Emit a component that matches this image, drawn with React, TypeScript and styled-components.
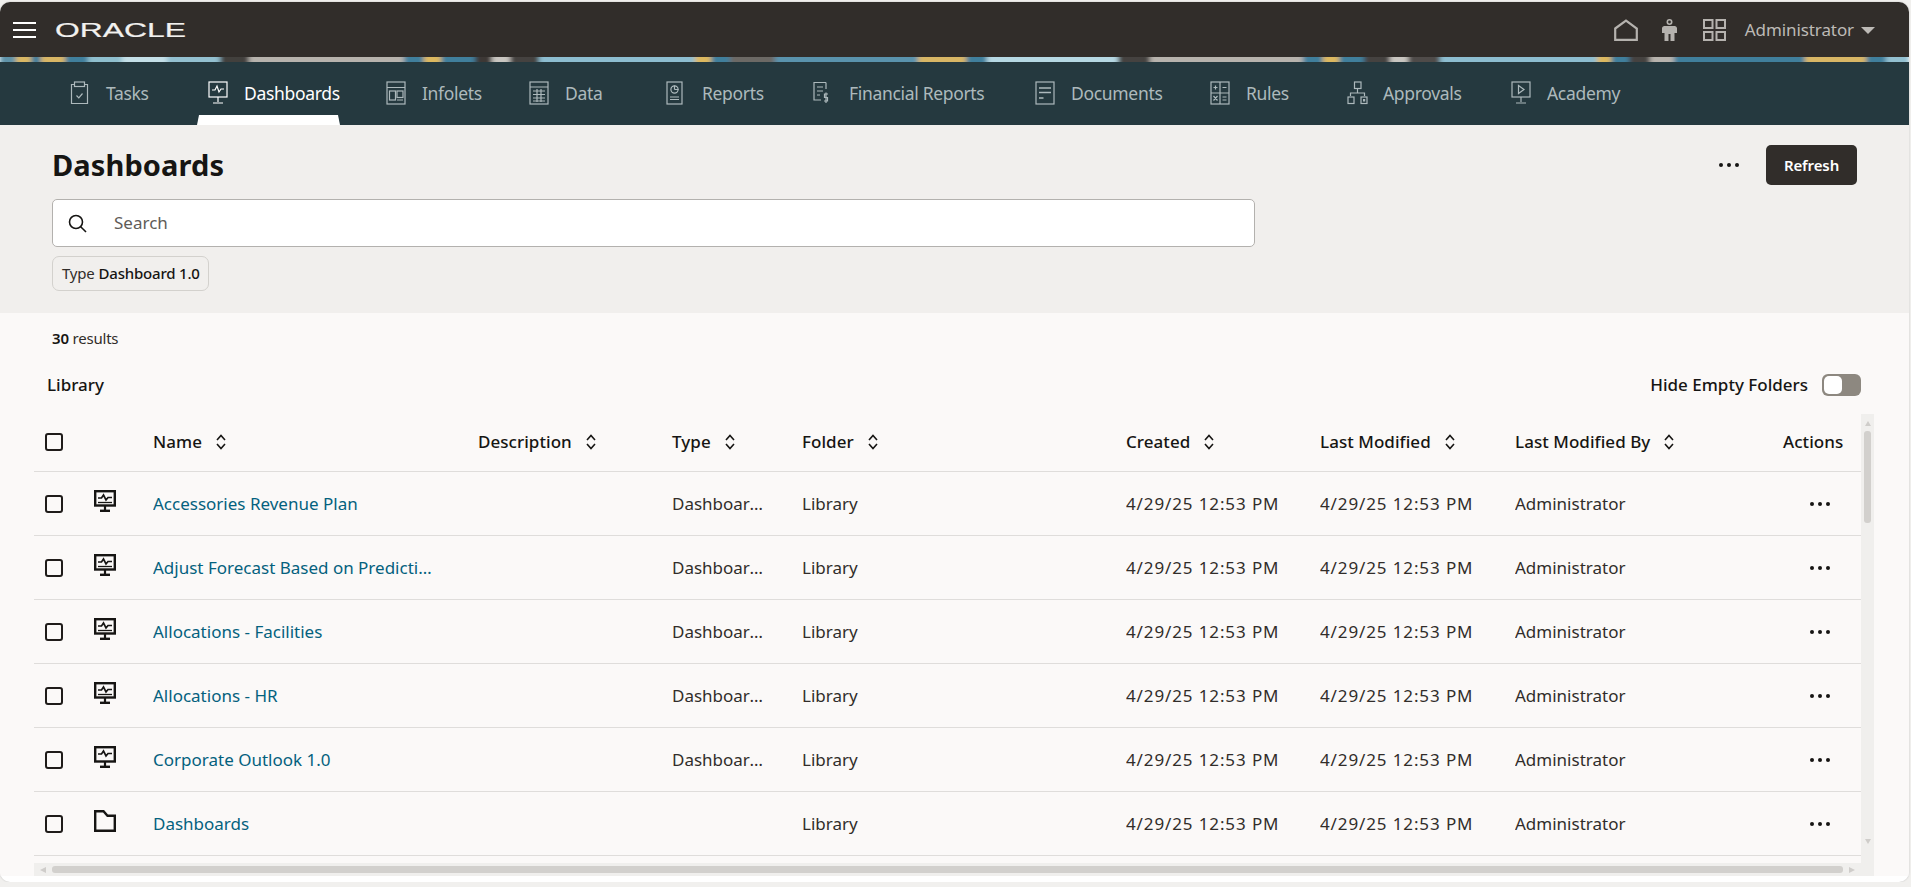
import React from 'react';
import styled, { createGlobalStyle } from 'styled-components';

const GlobalStyle = createGlobalStyle`
  html, body {
    margin: 0;
    padding: 0;
    background: #f1f0ee;
    overflow: hidden;
  }
  body {
    font-family: "Noto Sans", "Open Sans", sans-serif;
    color: #161513;
  }
  * {
    box-sizing: border-box;
  }
`;

const Shell = styled.div`
  width: 1909px;
  height: 880px;
  margin-top: 2px;
  border-radius: 10px;
  overflow: hidden;
  background: #ffffff;
  box-shadow: 0 0 2px rgba(0, 0, 0, 0.2);
  display: flex;
  flex-direction: column;
`;

const TopBar = styled.header`
  height: 55px;
  flex: none;
  background: #312d2a;
  display: flex;
  align-items: center;
  padding: 0 34px 0 13px;
  color: #bdbab6;
`;

const Hamburger = styled.div`
  width: 23px;
  height: 16px;
  display: flex;
  flex-direction: column;
  justify-content: space-between;
  margin-top: 1px;
  span {
    height: 2px;
    background: #ffffff;
  }
`;

const Logo = styled.svg`
  margin: 1px 0 0 19px;
  display: block;
`;

const Spacer = styled.div`
  flex: 1;
`;

const TopIcon = styled.svg<{ $gap: number }>`
  display: block;
  margin: 1px ${(p) => p.$gap}px 0 0;
`;

const UserName = styled.span`
  font-size: 17px;
  letter-spacing: -0.1px;
`;

const Caret = styled.span`
  width: 0;
  height: 0;
  margin: 1px 0 0 7px;
  border-left: 7px solid transparent;
  border-right: 7px solid transparent;
  border-top: 7px solid #bdbab6;
`;

const Banner = styled.svg`
  display: block;
  height: 5px;
  width: 100%;
  flex: none;
`;

const NavBar = styled.nav`
  height: 63px;
  flex: none;
  background: #25393f;
  display: flex;
  align-items: center;
  padding-left: 70px;
`;

const NavItem = styled.div<{ $w: number; $active?: boolean }>`
  position: relative;
  width: ${(p) => p.$w}px;
  flex: none;
  height: 100%;
  display: flex;
  align-items: center;
  gap: 15px;
  font-size: 17.5px;
  letter-spacing: -0.32px;
  padding-bottom: 2px;
  color: ${(p) => (p.$active ? '#ffffff' : '#adb9bc')};

  svg {
    flex: none;
    display: block;
  }
`;

const ActiveTab = styled.span`
  position: absolute;
  left: -11px;
  top: 53px;
  width: 143px;
  height: 10px;
  background: #ffffff;
  clip-path: polygon(2px 0, 141px 0, 143px 100%, 0 100%);
`;

const PageHead = styled.section`
  height: 188px;
  flex: none;
  background: #f1efed;
  padding: 20px 52px 0 52px;
  position: relative;
`;

const HeadRow = styled.div`
  display: flex;
  align-items: flex-start;
  justify-content: space-between;
`;

const Title = styled.h1`
  margin: 0;
  font-size: 29px;
  line-height: 40px;
  font-weight: 700;
  letter-spacing: 0.1px;
  color: #161513;
`;

const HeadActions = styled.div`
  display: flex;
  align-items: center;
  gap: 26px;
`;

const RefreshButton = styled.button`
  width: 91px;
  height: 40px;
  border: 0;
  border-radius: 5px;
  background: #312d2a;
  color: #ffffff;
  font-family: inherit;
  font-size: 15px;
  font-weight: 600;
  letter-spacing: -0.1px;
`;

const SearchBox = styled.div`
  width: 1203px;
  height: 48px;
  margin-top: 14px;
  background: #ffffff;
  border: 1px solid #b3b1ae;
  border-radius: 5px;
  display: flex;
  align-items: center;
  padding-left: 15px;
  gap: 27px;
  font-size: 17px;
  color: #5f5c58;
`;

const SearchLabel = styled.span`
  margin-top: -2px;
`;

const FilterChip = styled.div`
  display: inline-flex;
  align-items: center;
  gap: 4px;
  height: 35px;
  width: 157px;
  margin-top: 9px;
  padding: 0 0 2px 9px;
  border: 1px solid #d3d1cd;
  border-radius: 7px;
  font-size: 15px;
  letter-spacing: -0.2px;
  white-space: nowrap;
  color: #312d2a;

  b {
    font-weight: 500;
    color: #161513;
  }
`;

const Content = styled.main`
  flex: none;
  height: 563px;
  background: #fbf9f8;
  display: flex;
  flex-direction: column;
`;

const ResultCount = styled.div`
  height: 47px;
  padding: 15px 0 0 52px;
  font-size: 15px;
  line-height: 20px;
  letter-spacing: -0.2px;
  color: #312d2a;

  b {
    font-weight: 600;
    color: #161513;
  }
`;

const LibraryBar = styled.div`
  height: 54px;
  display: flex;
  align-items: center;
  justify-content: space-between;
  padding: 0 48px 5px 47px;
  font-size: 17px;
  font-weight: 500;
  color: #161513;
`;

const ToggleWrap = styled.div`
  display: flex;
  align-items: center;
  gap: 14px;
`;

const Toggle = styled.div`
  width: 39px;
  height: 22px;
  border-radius: 6px;
  background: #8d8880;
  padding: 2px;
  span {
    display: block;
    width: 18px;
    height: 18px;
    border-radius: 5px;
    background: #ffffff;
  }
`;

const TableFrame = styled.div`
  margin-left: 34px;
  width: 1840px;
  height: 462px;
  display: grid;
  grid-template-columns: 1827px 13px;
  grid-template-rows: 449px 13px;
`;

const Table = styled.div`
  overflow: hidden;
`;

const columns = '60px 59px 325px 194px 130px 324px 194px 195px 268px 78px';

const HeaderRow = styled.div`
  height: 58px;
  padding-bottom: 2px;
  display: grid;
  grid-template-columns: ${columns};
  align-items: center;
  border-bottom: 1px solid #dfdddb;
  font-size: 17px;
  font-weight: 500;
  letter-spacing: 0.05px;
  color: #161513;
`;

const Row = styled.div`
  height: 64px;
  display: grid;
  grid-template-columns: ${columns};
  align-items: center;
  border-bottom: 1px solid #dfdddb;
  font-size: 17px;
  color: #312d2a;
`;

const Checkbox = styled.span`
  display: block;
  width: 18px;
  height: 18px;
  margin-left: 11px;
  border: 2px solid #1f1c1a;
  border-radius: 3px;
`;

const HeadCell = styled.div`
  display: flex;
  align-items: center;
  gap: 14px;
  white-space: nowrap;
`;

const Cell = styled.div`
  white-space: nowrap;
  overflow: hidden;
  text-overflow: ellipsis;
`;

const DateCell = styled(Cell)`
  letter-spacing: 0.88px;
`;

const TypeCell = styled(Cell)`
  max-width: 95px;
`;

const NameLink = styled(Cell)`
  max-width: 284px;
  color: #04617e;
`;

const RowIcon = styled.svg`
  display: block;
  margin-top: -5px;
`;

const Kebab = styled.svg`
  display: block;
  margin-left: 26px;
`;

const HeadKebab = styled.svg`
  display: block;
`;

const VScroll = styled.div`
  background: #f0efed;
  display: flex;
  flex-direction: column;
  align-items: center;
  padding-top: 7px;
`;

const VThumb = styled.div`
  width: 7px;
  height: 92px;
  margin-top: 5px;
  border-radius: 3px;
  background: #d2d0cd;
`;

const HScroll = styled.div`
  background: #f0efed;
  display: flex;
  align-items: center;
  padding: 0 6px;
`;

const HThumb = styled.div`
  flex: 1;
  height: 7px;
  margin: 0 6px;
  border-radius: 3px;
  background: #d2d0cd;
`;

const Arrow = styled.span<{ $dir: 'up' | 'down' | 'left' | 'right' }>`
  width: 0;
  height: 0;
  flex: none;
  border: 3.5px solid transparent;
  ${(p) => (p.$dir === 'up' ? 'border-top-width:0;border-bottom:5px solid #cfcdca;' : '')}
  ${(p) => (p.$dir === 'down' ? 'border-bottom-width:0;border-top:5px solid #cfcdca;margin-top:auto;margin-bottom:19px;' : '')}
  ${(p) => (p.$dir === 'left' ? 'border-left-width:0;border-right:6px solid #cfcdca;' : '')}
  ${(p) => (p.$dir === 'right' ? 'border-right-width:0;border-left:6px solid #cfcdca;' : '')}
`;

const Corner = styled.div`
  background: #f0efed;
`;

const FooterStrip = styled.div`
  flex: 1;
  background: #ffffff;
`;

const bannerSegments: [number, number, string][] = [
  [0, 16, '#5f93a8'], [16, 31, '#d9b763'], [31, 41, '#3f7f9c'], [41, 65, '#d8b665'], [65, 88, '#3f7f9c'],
  [88, 122, '#8fbfce'], [122, 167, '#c4dfe7'], [167, 220, '#93c0d0'], [220, 249, '#43403d'], [249, 404, '#b7b3ad'],
  [404, 424, '#3f7f9c'], [424, 441, '#dcb85e'], [441, 475, '#3f7f9c'], [475, 492, '#3c3936'], [492, 510, '#c9c6c1'],
  [510, 539, '#45423f'], [539, 695, '#8dbdd0'], [695, 711, '#dcb85e'], [711, 730, '#3f7f9c'], [730, 775, '#6c6965'],
  [775, 918, '#5a93ad'], [918, 966, '#d8b665'], [966, 987, '#3f7f9c'], [987, 1118, '#b6d8e3'], [1118, 1150, '#45423f'],
  [1150, 1303, '#b7b3ad'], [1303, 1323, '#3f7f9c'], [1323, 1339, '#dcb85e'], [1339, 1364, '#3f7f9c'], [1364, 1390, '#45423f'],
  [1390, 1408, '#c9c6c1'], [1408, 1440, '#504c49'], [1440, 1597, '#8dbdd0'], [1597, 1611, '#dcb85e'], [1611, 1629, '#3f7f9c'],
  [1629, 1650, '#45423f'], [1650, 1674, '#b7b3ad'], [1674, 1805, '#3f7f9c'], [1805, 1866, '#d8b665'], [1866, 1886, '#3f7f9c'],
  [1886, 1909, '#93c0d0'],
];

function NavIcon({ name }: { name: string }) {
  const p = { fill: 'none', stroke: 'currentColor', strokeWidth: 1.2 };
  const inner = {
    tasks: (
      <>
        <path d="M4.5 3.5H1.5V22.5H17.5V3.5H14.5" {...p} />
        <rect x="4.5" y="1" width="10" height="4.5" {...p} />
        <path d="M6.5 14.5L8.8 16.8L12.5 12.5" {...p} />
      </>
    ),
    dash: (
      <>
        <rect x="1" y="1" width="18" height="15" {...p} />
        <path d="M4 9H7L9 5L11 11L13 8H16M10 16V21M5 22H15" {...p} />
      </>
    ),
    info: (
      <>
        <rect x="1" y="1" width="18" height="22" {...p} />
        <path d="M1 6.5H19" {...p} />
        <rect x="3.5" y="10" width="6" height="9" {...p} />
        <rect x="11" y="10" width="6" height="6.5" {...p} />
        <path d="M11 19H17" {...p} />
      </>
    ),
    data: (
      <>
        <rect x="1" y="1" width="18" height="22" {...p} />
        <path d="M1 6H19M4 10H16M4 13.5H16M4 17H16M4 20H16M8 8V21M12 8V21" {...p} />
      </>
    ),
    reports: (
      <>
        <rect x="1" y="1" width="15" height="22" {...p} />
        <circle cx="8.5" cy="8.5" r="3.6" {...p} />
        <path d="M8.5 8.5H12.5M8.5 8.5V4.5M4 16H13M4 18.5H13" {...p} />
      </>
    ),
    fin: (
      <>
        <path d="M13 1.5H1V19H8M13 1.5V8" {...p} />
        <path d="M4 6H10M4 10H10M4 14H7" {...p} />
        <path d="M15 13H11.5V16.5H14.5V20H11M13 11.5V22" {...p} />
      </>
    ),
    docs: (
      <>
        <rect x="1" y="1" width="18" height="22" {...p} />
        <path d="M4 7H16M4 11.5H16M4 17H8.5" {...p} strokeWidth={1.5} />
      </>
    ),
    rules: (
      <>
        <rect x="1" y="1" width="18" height="22" {...p} />
        <path d="M10 1V23M1 12H19M3.5 6.5H7.5M5.5 4.5V8.5M12.5 6.5H16.5M12.5 16H16.5M12.5 19H16.5M3.5 15L7.5 19.5M7.5 15L3.5 19.5" {...p} />
      </>
    ),
    approvals: (
      <>
        <rect x="7.5" y="1" width="6.5" height="6.5" {...p} />
        <path d="M10.5 7.5V12M3.5 15V12H17.5V15" {...p} />
        <rect x="1" y="16" width="6" height="6.5" {...p} />
        <rect x="14" y="16" width="6" height="6.5" {...p} />
        <rect x="16" y="18" width="2.2" height="2.5" fill="currentColor" />
      </>
    ),
    academy: (
      <>
        <rect x="1" y="1" width="18" height="15" {...p} />
        <path d="M7.5 4.5L13 8.5L7.5 12.5Z" {...p} />
        <path d="M10 16V21M5 22H15" {...p} />
      </>
    ),
  }[name];
  return (
    <svg width="21" height="24" viewBox="0 0 21 24">
      {inner}
    </svg>
  );
}

const navItems = [
  { name: 'tasks', label: 'Tasks', w: 138 },
  { name: 'dash', label: 'Dashboards', w: 178, active: true },
  { name: 'info', label: 'Infolets', w: 143 },
  { name: 'data', label: 'Data', w: 137 },
  { name: 'reports', label: 'Reports', w: 147 },
  { name: 'fin', label: 'Financial Reports', w: 222 },
  { name: 'docs', label: 'Documents', w: 175 },
  { name: 'rules', label: 'Rules', w: 137 },
  { name: 'approvals', label: 'Approvals', w: 164 },
  { name: 'academy', label: 'Academy', w: 120 },
];

const rows = [
  { name: 'Accessories Revenue Plan', icon: 'dash' },
  { name: 'Adjust Forecast Based on Predictive Planning', icon: 'dash' },
  { name: 'Allocations - Facilities', icon: 'dash' },
  { name: 'Allocations - HR', icon: 'dash' },
  { name: 'Corporate Outlook 1.0', icon: 'plain' },
  { name: 'Dashboards', icon: 'folder' },
];

const headers = [
  ['Name', true],
  ['Description', true],
  ['Type', true],
  ['Folder', true],
  ['Created', true],
  ['Last Modified', true],
  ['Last Modified By', true],
  ['Actions', false],
] as const;

function SortIcon() {
  return (
    <svg width="10" height="16" viewBox="0 0 10 16">
      <path d="M1 6L5 1.5L9 6M1 10L5 14.5L9 10" fill="none" stroke="#161513" strokeWidth="1.6" />
    </svg>
  );
}

function DashboardIcon({ framed }: { framed: boolean }) {
  return (
    <RowIcon width="22" height="22" viewBox="0 0 22 22">
      <rect x="1.2" y="1.2" width="19.6" height="14.3" fill="none" stroke="#161513" strokeWidth="2.4" />
      {framed && <path d="M4 12.5H18" stroke="#161513" strokeWidth="1.3" />}
      <path d="M4 8H7.5L9.5 5L12 10L14 7.5H18" fill="none" stroke="#161513" strokeWidth="1.7" />
      <path d="M11 15.5V20" stroke="#161513" strokeWidth="2.2" />
      <path d="M6 20.8H16" stroke="#161513" strokeWidth="2.4" />
    </RowIcon>
  );
}

function FolderIcon() {
  return (
    <RowIcon width="22" height="22" viewBox="0 0 22 22">
      <path d="M1.2 1.2H9.5L13.5 5.7H20.8V20.8H1.2Z" fill="none" stroke="#161513" strokeWidth="2.4" />
    </RowIcon>
  );
}

function Dots() {
  return (
    <>
      <circle cx="3" cy="3" r="2" fill="#161513" />
      <circle cx="11" cy="3" r="2" fill="#161513" />
      <circle cx="19" cy="3" r="2" fill="#161513" />
    </>
  );
}

export default function App() {
  return (
    <>
      <GlobalStyle />
      <Shell>
        <TopBar>
          <Hamburger>
            <span />
            <span />
            <span />
          </Hamburger>
          <Logo width="132" height="18" viewBox="0 0 132 18">
            <text
              x="0"
              y="16"
              fontFamily="Liberation Sans"
              fontSize="21"
              fill="#f2f1ef"
              stroke="#f2f1ef"
              strokeWidth="0.2"
              textLength="131"
              lengthAdjust="spacingAndGlyphs"
            >
              ORACLE
            </text>
          </Logo>
          <Spacer />
          <TopIcon $gap={24} width="24" height="22" viewBox="0 0 24 22">
            <path d="M1.2 9.5L12 1.5L22.8 9.5V20.8H1.2Z" fill="none" stroke="#b5b2ae" strokeWidth="2.2" />
          </TopIcon>
          <TopIcon $gap={26} width="15" height="22" viewBox="0 0 15 22">
            <circle cx="7.5" cy="3" r="2.2" fill="none" stroke="#b5b2ae" strokeWidth="1.6" />
            <path
              d="M2.5 7H12.5C14 7 15 8 15 9.5V14H12.5V22H8.5V15H6.5V22H2.5V14H0V9.5C0 8 1 7 2.5 7Z"
              fill="#b5b2ae"
            />
          </TopIcon>
          <TopIcon $gap={19} width="23" height="22" viewBox="0 0 23 22">
            <rect x="1" y="1" width="8.5" height="8" fill="none" stroke="#b5b2ae" strokeWidth="2" />
            <rect x="13.5" y="1" width="8.5" height="8" fill="none" stroke="#b5b2ae" strokeWidth="2" />
            <rect x="1" y="13" width="8.5" height="8" fill="none" stroke="#b5b2ae" strokeWidth="2" />
            <rect x="13.5" y="13" width="8.5" height="8" fill="none" stroke="#b5b2ae" strokeWidth="2" />
          </TopIcon>
          <UserName>Administrator</UserName>
          <Caret />
        </TopBar>

        <Banner viewBox="0 0 1909 5" preserveAspectRatio="none">
          <filter id="bannerBlur" x="0" y="0" width="100%" height="100%">
            <feGaussianBlur stdDeviation="2.5 0" />
          </filter>
          <g filter="url(#bannerBlur)">
            {bannerSegments.map(([a, b, c]) => (
              <rect key={a} x={a} y="0" width={b - a} height="5" fill={c} />
            ))}
          </g>
        </Banner>

        <NavBar>
          {navItems.map((item) => (
            <NavItem key={item.label} $w={item.w} $active={item.active}>
              <NavIcon name={item.name} />
              {item.label}
              {item.active && <ActiveTab />}
            </NavItem>
          ))}
        </NavBar>

        <PageHead>
          <HeadRow>
            <Title>Dashboards</Title>
            <HeadActions>
              <HeadKebab width="22" height="6" viewBox="0 0 22 6">
                <Dots />
              </HeadKebab>
              <RefreshButton>Refresh</RefreshButton>
            </HeadActions>
          </HeadRow>
          <SearchBox>
            <svg width="19" height="19" viewBox="0 0 19 19">
              <circle cx="8" cy="8" r="6.5" fill="none" stroke="#161513" strokeWidth="1.6" />
              <path d="M12.7 12.7L18 18" stroke="#161513" strokeWidth="1.6" />
            </svg>
            <SearchLabel>Search</SearchLabel>
          </SearchBox>
          <FilterChip>
            Type <b>Dashboard 1.0</b>
          </FilterChip>
        </PageHead>

        <Content>
          <ResultCount>
            <b>30</b> results
          </ResultCount>
          <LibraryBar>
            Library
            <ToggleWrap>
              Hide Empty Folders
              <Toggle>
                <span />
              </Toggle>
            </ToggleWrap>
          </LibraryBar>
          <TableFrame>
            <Table>
              <HeaderRow>
                <Checkbox />
                <span />
                {headers.map(([label, sortable]) => (
                  <HeadCell key={label}>
                    {label}
                    {sortable && <SortIcon />}
                  </HeadCell>
                ))}
              </HeaderRow>
              {rows.map((row) => (
                <Row key={row.name}>
                  <Checkbox />
                  {row.icon === 'folder' ? <FolderIcon /> : <DashboardIcon framed={row.icon === 'dash'} />}
                  <NameLink>{row.name}</NameLink>
                  <span />
                  <TypeCell>{row.icon === 'folder' ? '' : 'Dashboard 1.0'}</TypeCell>
                  <Cell>Library</Cell>
                  <DateCell>4/29/25 12:53 PM</DateCell>
                  <DateCell>4/29/25 12:53 PM</DateCell>
                  <Cell>Administrator</Cell>
                  <Kebab width="22" height="6" viewBox="0 0 22 6">
                    <Dots />
                  </Kebab>
                </Row>
              ))}
            </Table>
            <VScroll>
              <Arrow $dir="up" />
              <VThumb />
              <Arrow $dir="down" />
            </VScroll>
            <HScroll>
              <Arrow $dir="left" />
              <HThumb />
              <Arrow $dir="right" />
            </HScroll>
            <Corner />
          </TableFrame>
          <FooterStrip />
        </Content>
      </Shell>
    </>
  );
}
